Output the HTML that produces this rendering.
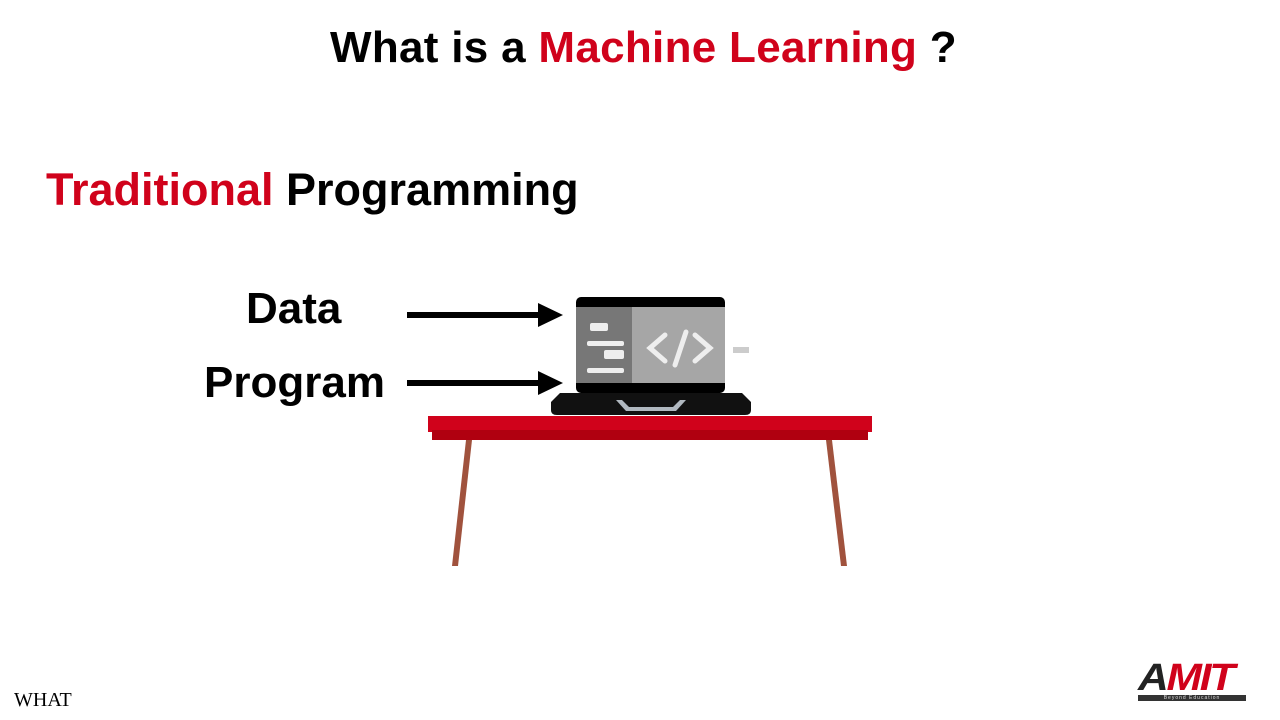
<!DOCTYPE html>
<html><head><style>
body{margin:0;width:1280px;height:720px;background:#fff;position:relative;overflow:hidden;font-family:"Liberation Sans",sans-serif;}
.t{position:absolute;white-space:nowrap;color:#000;font-weight:bold}
.r{color:#d0021b}
</style></head><body>
<div class="t" style="left:330px;top:23px;font-size:44px;letter-spacing:0.3px;">What is a <span class="r">Machine Learning</span> ?</div>
<div class="t" style="left:46px;top:164px;font-size:45px;">  <span class="r">Traditional</span> Programming</div>
<div class="t" style="left:246px;top:284px;font-size:44px;">Data</div>
<div class="t" style="left:204px;top:358px;font-size:44px;">Program</div>
<div class="t" style="left:14px;top:689px;font-size:20px;font-weight:normal;font-family:'Liberation Serif',serif;">WHAT</div>
<svg width="1280" height="720" style="position:absolute;left:0;top:0">
<rect x="407" y="312" width="135" height="6" fill="#000"/><polygon points="538,303 563,315 538,327" fill="#000"/>
<rect x="407" y="380" width="135" height="6" fill="#000"/><polygon points="538,371 563,383 538,395" fill="#000"/>
<rect x="576" y="297" width="149" height="96" rx="5" fill="#000"/>
<rect x="576" y="307" width="56" height="76" fill="#777"/>
<rect x="632" y="307" width="93" height="76" fill="#a6a6a6"/>
<g fill="#eee"><rect x="590" y="323" width="18" height="8" rx="2"/><rect x="587" y="341" width="37" height="5" rx="2"/><rect x="604" y="350" width="20" height="9" rx="2"/><rect x="587" y="368" width="37" height="5" rx="2"/></g>
<g stroke="#eee" stroke-width="5" fill="none" stroke-linecap="round"><polyline points="665,335 650,348 665,361"/><polyline points="695,335 710,348 695,361"/><line x1="686" y1="332" x2="675" y2="365"/></g>
<rect x="733" y="347" width="16" height="6" fill="#ccc"/>
<path d="M560 393 H742 L751 402 V410 Q751 415 745 415 H557 Q551 415 551 410 V402 Z" fill="#111"/>
<polygon points="616,400 686,400 676,411 626,411" fill="#b0b8c0"/><polygon points="622,400 680,400 673,407 629,407" fill="#111"/>
<rect x="428" y="416" width="444" height="16" fill="#d0021b"/>
<rect x="432" y="430" width="436" height="10" fill="#b00010"/>
<polygon points="466,440 472,440 458,566 452,566" fill="#a0523d"/>
<polygon points="826,440 832,440 847,566 841,566" fill="#a0523d"/>
</svg>
<div style="position:absolute;left:1138px;top:660px;width:108px;height:42px;">
<div style="font:italic bold 38px 'Liberation Sans',sans-serif;letter-spacing:-2px;line-height:36px;color:#d0021b;transform:scaleX(1.12);transform-origin:left;"><span style="color:#222">A</span>MIT</div>
<div style="background:#333;color:#ddd;font-size:5px;text-align:center;height:6px;line-height:6px;margin-top:-1px;letter-spacing:1px;">Beyond Education</div>
</div>
</body></html>
